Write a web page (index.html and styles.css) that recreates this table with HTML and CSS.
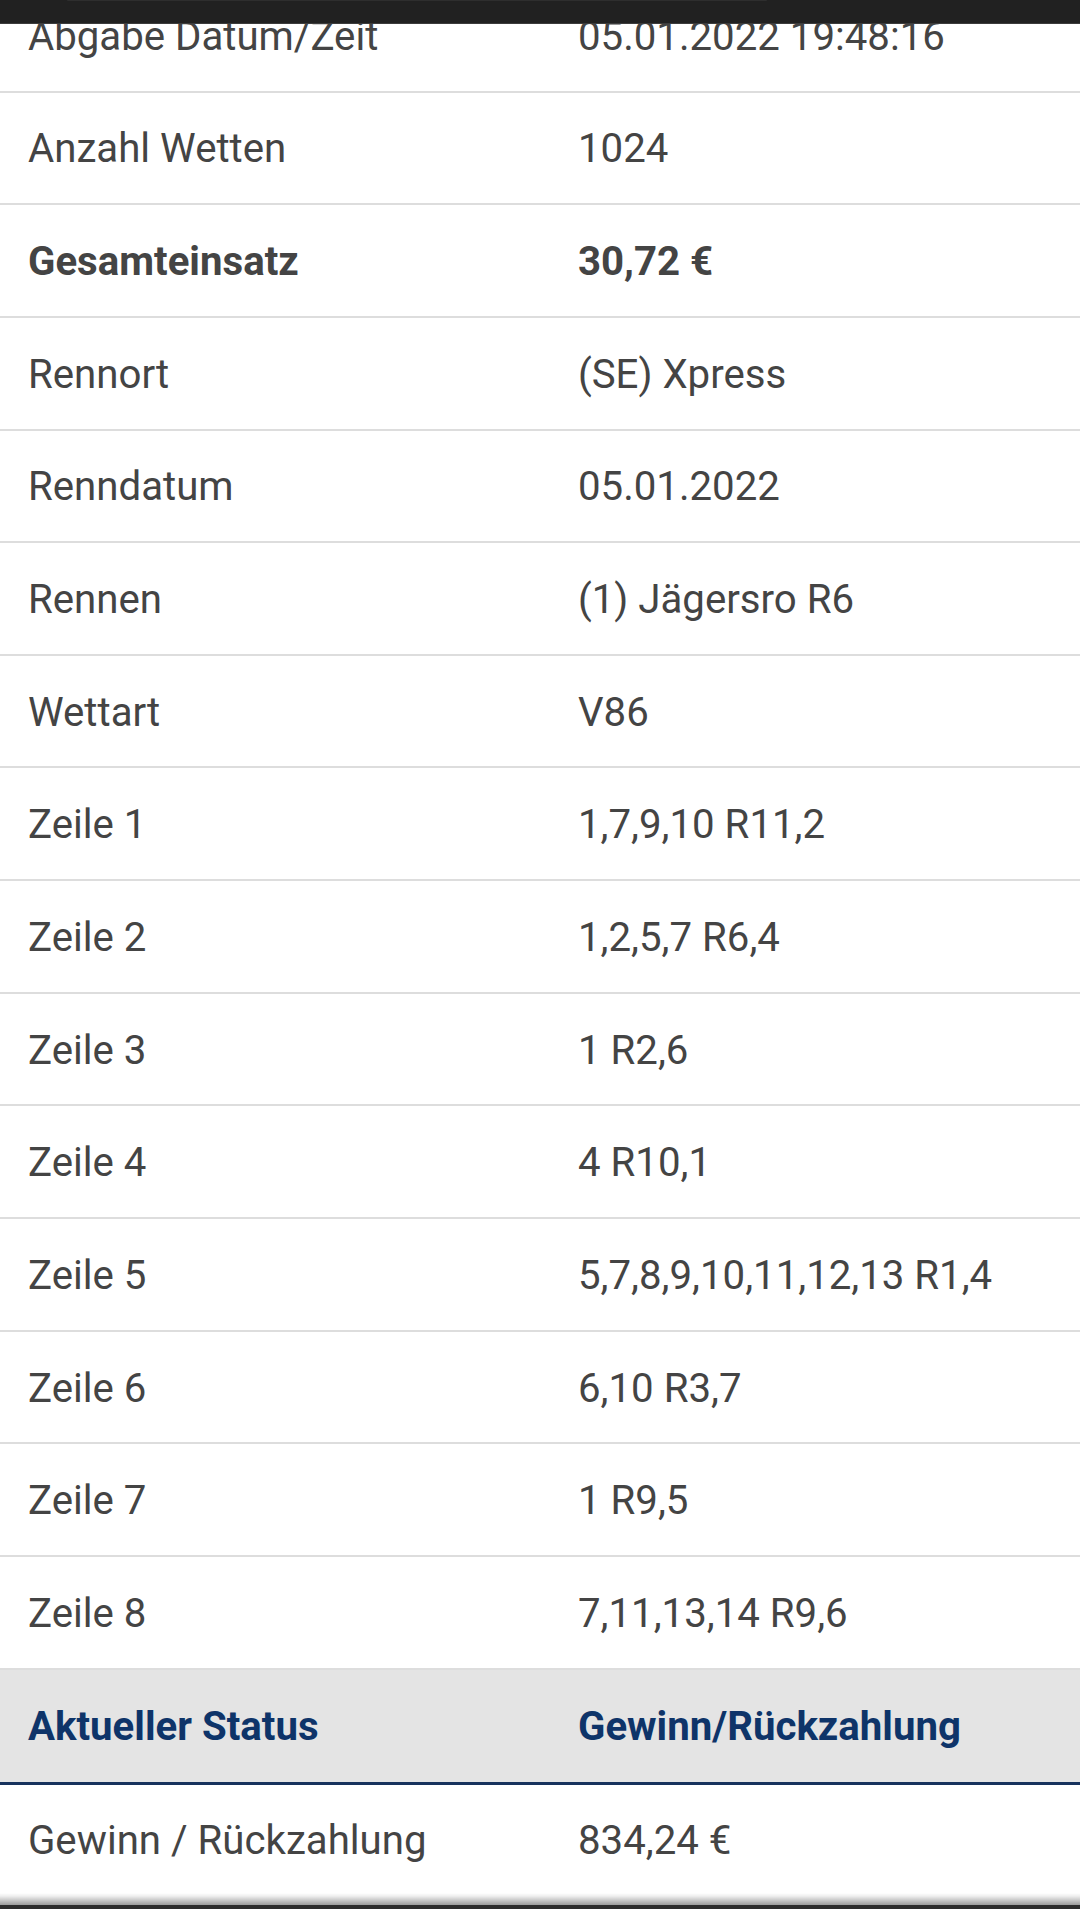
FILE: index.html
```html
<!DOCTYPE html>
<html lang="de">
<head>
<meta charset="utf-8">
<title>Wettdetails</title>
<link rel="stylesheet" href="styles.css">
</head>
<body>
<div class="topbar"><div class="topbar-strip"></div></div>
<div class="table">
  <div class="row"><div class="cell">Abgabe Datum/Zeit</div><div class="cell">05.01.2022 19:48:16</div></div>
  <div class="row"><div class="cell">Anzahl Wetten</div><div class="cell">1024</div></div>
  <div class="row bold"><div class="cell">Gesamteinsatz</div><div class="cell">30,72 €</div></div>
  <div class="row"><div class="cell">Rennort</div><div class="cell">(SE) Xpress</div></div>
  <div class="row"><div class="cell">Renndatum</div><div class="cell">05.01.2022</div></div>
  <div class="row"><div class="cell">Rennen</div><div class="cell">(1) Jägersro R6</div></div>
  <div class="row"><div class="cell">Wettart</div><div class="cell">V86</div></div>
  <div class="row"><div class="cell">Zeile 1</div><div class="cell">1,7,9,10 R11,2</div></div>
  <div class="row"><div class="cell">Zeile 2</div><div class="cell">1,2,5,7 R6,4</div></div>
  <div class="row"><div class="cell">Zeile 3</div><div class="cell">1 R2,6</div></div>
  <div class="row"><div class="cell">Zeile 4</div><div class="cell">4 R10,1</div></div>
  <div class="row"><div class="cell">Zeile 5</div><div class="cell">5,7,8,9,10,11,12,13 R1,4</div></div>
  <div class="row"><div class="cell">Zeile 6</div><div class="cell">6,10 R3,7</div></div>
  <div class="row"><div class="cell">Zeile 7</div><div class="cell">1 R9,5</div></div>
  <div class="row"><div class="cell">Zeile 8</div><div class="cell">7,11,13,14 R9,6</div></div>
  <div class="row head"><div class="cell">Aktueller Status</div><div class="cell">Gewinn/Rückzahlung</div></div>
  <div class="row last"><div class="cell">Gewinn / Rückzahlung</div><div class="cell">834,24 €</div></div>
</div>
<div class="bottombar"></div>
</body>
</html>
```
FILE: styles.css
```css
html, body {
  margin: 0;
  padding: 0;
  background: #ffffff;
}
body {
  font-family: Roboto, "Liberation Sans", Arial, sans-serif;
  color: #444444;
  font-size: 40.2px;
  overflow: hidden;
}
.topbar {
  position: fixed;
  top: 0;
  left: 0;
  right: 0;
  height: 23px;
  background: #212121;
  border-bottom: 1px solid #3c3c3c;
  z-index: 5;
}
.topbar-strip {
  margin-left: 67px;
  width: 700px;
  height: 1px;
  background: #2e2e2e;
  border-radius: 0 0 2px 2px;
}
.table {
  margin-top: -20px;
  display: flex;
  flex-direction: column;
}
.row {
  display: grid;
  grid-template-columns: 550px 1fr;
  height: 110.65px;
  border-bottom: 2px solid #dddddd;
  align-items: center;
}
.cell {
  padding-left: 28px;
  padding-top: 2px;
  white-space: nowrap;
}
.bold {
  font-weight: 700;
}
.head {
  background: #e4e4e4;
  color: #0e3469;
  font-weight: 700;
  height: 112px;
  border-bottom: 3px solid #17325d;
}
.last {
  border-bottom: none;
}
.bottombar {
  position: fixed;
  left: 0;
  right: 0;
  bottom: 0;
  height: 16px;
  background: linear-gradient(to bottom, rgba(255,255,255,0) 0px, #f0f0f0 3px, #9a9a9a 12px, #2b2b2b 12px, #2b2b2b 16px);
  z-index: 5;
}
```
